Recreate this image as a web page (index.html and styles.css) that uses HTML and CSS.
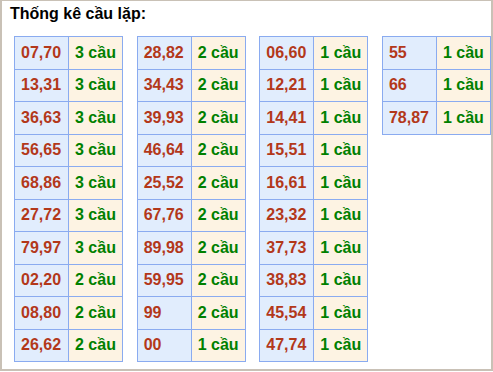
FILE: index.html
```html
<!DOCTYPE html>
<html lang="vi">
<head>
<meta charset="utf-8">
<title>Thống kê cầu lặp</title>
<link rel="stylesheet" href="styles.css">
</head>
<body>
<div class="frame">
  <div class="title">Thống kê cầu lặp:</div>
  <div class="tables">
    <table class="stat">
      <tr><td class="num">07,70</td><td class="cnt">3 cầu</td></tr>
      <tr><td class="num">13,31</td><td class="cnt">3 cầu</td></tr>
      <tr><td class="num">36,63</td><td class="cnt">3 cầu</td></tr>
      <tr><td class="num">56,65</td><td class="cnt">3 cầu</td></tr>
      <tr><td class="num">68,86</td><td class="cnt">3 cầu</td></tr>
      <tr><td class="num">27,72</td><td class="cnt">3 cầu</td></tr>
      <tr><td class="num">79,97</td><td class="cnt">3 cầu</td></tr>
      <tr><td class="num">02,20</td><td class="cnt">2 cầu</td></tr>
      <tr><td class="num">08,80</td><td class="cnt">2 cầu</td></tr>
      <tr><td class="num">26,62</td><td class="cnt">2 cầu</td></tr>
    </table>
    <table class="stat">
      <tr><td class="num">28,82</td><td class="cnt">2 cầu</td></tr>
      <tr><td class="num">34,43</td><td class="cnt">2 cầu</td></tr>
      <tr><td class="num">39,93</td><td class="cnt">2 cầu</td></tr>
      <tr><td class="num">46,64</td><td class="cnt">2 cầu</td></tr>
      <tr><td class="num">25,52</td><td class="cnt">2 cầu</td></tr>
      <tr><td class="num">67,76</td><td class="cnt">2 cầu</td></tr>
      <tr><td class="num">89,98</td><td class="cnt">2 cầu</td></tr>
      <tr><td class="num">59,95</td><td class="cnt">2 cầu</td></tr>
      <tr><td class="num">99</td><td class="cnt">2 cầu</td></tr>
      <tr><td class="num">00</td><td class="cnt">1 cầu</td></tr>
    </table>
    <table class="stat">
      <tr><td class="num">06,60</td><td class="cnt">1 cầu</td></tr>
      <tr><td class="num">12,21</td><td class="cnt">1 cầu</td></tr>
      <tr><td class="num">14,41</td><td class="cnt">1 cầu</td></tr>
      <tr><td class="num">15,51</td><td class="cnt">1 cầu</td></tr>
      <tr><td class="num">16,61</td><td class="cnt">1 cầu</td></tr>
      <tr><td class="num">23,32</td><td class="cnt">1 cầu</td></tr>
      <tr><td class="num">37,73</td><td class="cnt">1 cầu</td></tr>
      <tr><td class="num">38,83</td><td class="cnt">1 cầu</td></tr>
      <tr><td class="num">45,54</td><td class="cnt">1 cầu</td></tr>
      <tr><td class="num">47,74</td><td class="cnt">1 cầu</td></tr>
    </table>
    <table class="stat">
      <tr><td class="num">55</td><td class="cnt">1 cầu</td></tr>
      <tr><td class="num">66</td><td class="cnt">1 cầu</td></tr>
      <tr><td class="num">78,87</td><td class="cnt">1 cầu</td></tr>
    </table>
  </div>
</div>
</body>
</html>
```
FILE: styles.css
```css
html, body {
  margin: 0;
  padding: 0;
  background: #ffffff;
}

body {
  font-family: "Liberation Sans", Arial, sans-serif;
}

.frame {
  box-sizing: border-box;
  width: 493px;
  height: 371px;
  border: 2px solid #c9c1b6;
  border-top-width: 1px;
  background: #ffffff;
  padding: 3px 0 0 8px;
}

.title {
  font-size: 16px;
  font-weight: bold;
  line-height: 20px;
  color: #000000;
}

.tables {
  display: flex;
  align-items: flex-start;
  gap: 13.67px;
  margin-top: 12px;
  margin-left: 4px;
}

.stat {
  width: 109px;
  border-collapse: collapse;
  table-layout: fixed;
  flex: none;
}

.stat td {
  width: 50%;
  height: 32.5px;
  border: 1px solid #8aabf0;
  padding: 0 0 0 6px;
  font-size: 16px;
  font-weight: bold;
  vertical-align: middle;
  white-space: nowrap;
  box-sizing: border-box;
}

.stat td.num {
  background: #e1edfd;
  color: #b3381a;
}

.stat td.cnt {
  background: #fdf3e3;
  color: #008000;
}
```
